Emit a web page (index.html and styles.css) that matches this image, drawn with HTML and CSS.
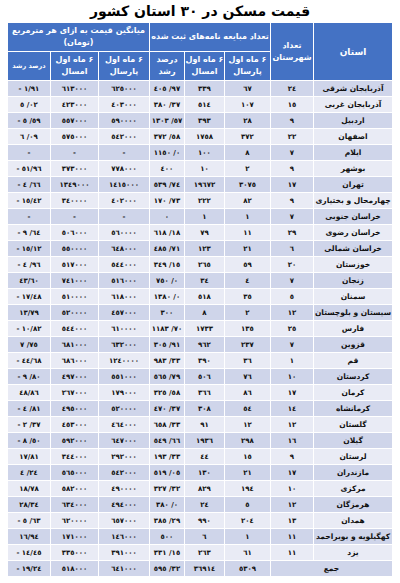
FILE: index.html
```html
<!DOCTYPE html>
<html lang="fa" dir="rtl">
<head>
<meta charset="utf-8">
<link rel="stylesheet" href="styles.css">
</head>
<body>
<h1 class="title">قیمت مسکن در ۳۰ استان کشور</h1>
<table class="grid">
<colgroup>
<col class="c-prov"><col class="c-city"><col class="c-a"><col class="c-b"><col class="c-c"><col class="c-d"><col class="c-e"><col class="c-f">
</colgroup>
<thead>
<tr class="h1">
<th rowspan="2" class="big">استان</th>
<th rowspan="2">تعداد<br>شهرستان</th>
<th colspan="3">تعداد مبایعه نامه‌های ثبت شده</th>
<th colspan="3">میانگین قیمت به ازای هر مترمربع<br>(تومان)</th>
</tr>
<tr class="h2">
<th>۶ ماه اول<br>پارسال</th>
<th>۶ ماه اول<br>امسال</th>
<th>درصد<br>رشد</th>
<th>۶ ماه اول<br>پارسال</th>
<th>۶ ماه اول<br>امسال</th>
<th class="tight">درصد رشد</th>
</tr>
</thead>
<tbody>
<tr><td class="p">آذربایجان شرقی</td><td><b>٢٤</b></td><td><b>٦٧</b></td><td><b>٣٣٩</b></td><td><b>٤٠٥ /٩٧</b></td><td><b>٦٢٥٠٠٠</b></td><td><b>٦١٣٠٠٠</b></td><td><b>- ١/٩١</b></td></tr>
<tr><td class="p">آذربایجان غربی</td><td><b>١٥</b></td><td><b>١٠٧</b></td><td><b>٥١٤</b></td><td><b>٣٨٠ /٣٧</b></td><td><b>٤٠٣٠٠٠</b></td><td><b>٤٢٣٠٠٠</b></td><td><b>٥ /٠٢</b></td></tr>
<tr><td class="p">اردبیل</td><td><b>٩</b></td><td><b>٢٨</b></td><td><b>٣٩٣</b></td><td><b>١٣٠٣ /٥٧</b></td><td><b>٥٩٠٠٠٠</b></td><td><b>٥٥٧٠٠٠</b></td><td><b>- ٥ /٥٩</b></td></tr>
<tr><td class="p">اصفهان</td><td><b>٢٢</b></td><td><b>٣٧٢</b></td><td><b>١٧٥٨</b></td><td><b>٣٧٢ /٥٨</b></td><td><b>٥٤٢٠٠٠</b></td><td><b>٥٧٥٠٠٠</b></td><td><b>٦ /٠٩</b></td></tr>
<tr><td class="p">ایلام</td><td><b>٧</b></td><td><b>٨</b></td><td><b>١٠٠</b></td><td><b>١١٥٠ /٠</b></td><td><b>-</b></td><td><b>-</b></td><td><b>-</b></td></tr>
<tr><td class="p">بوشهر</td><td><b>٩</b></td><td><b>٢</b></td><td><b>١٠</b></td><td><b>٤٠٠</b></td><td><b>٧٧٨٠٠٠</b></td><td><b>٣٧٣٠٠٠</b></td><td><b>- ٥١/٩٦</b></td></tr>
<tr><td class="p">تهران</td><td><b>١٧</b></td><td><b>٣٠٧٥</b></td><td><b>١٩٦٧٢</b></td><td><b>٥٣٩ /٧٤</b></td><td><b>١٤١٥٠٠٠</b></td><td><b>١٣٤٩٠٠٠</b></td><td><b>- ٤ /٦٦</b></td></tr>
<tr><td class="p">چهارمحال و بختیاری</td><td><b>٩</b></td><td><b>٨٢</b></td><td><b>٢٢٢</b></td><td><b>١٧٠ /٧٣</b></td><td><b>٤٠٢٠٠٠</b></td><td><b>٣٤٠٠٠٠</b></td><td><b>- ١٥/٤٢</b></td></tr>
<tr><td class="p">خراسان جنوبی</td><td><b>٧</b></td><td><b>١</b></td><td><b>١</b></td><td><b>٠</b></td><td><b>-</b></td><td><b>-</b></td><td><b>-</b></td></tr>
<tr><td class="p">خراسان رضوی</td><td><b>٢٩</b></td><td><b>١١</b></td><td><b>٧٩</b></td><td><b>٦١٨ /١٨</b></td><td><b>٥٦٠٠٠٠</b></td><td><b>٥٠٦٠٠٠</b></td><td><b>- ٩ /٦٤</b></td></tr>
<tr><td class="p">خراسان شمالی</td><td><b>٦</b></td><td><b>٢١</b></td><td><b>١٢٣</b></td><td><b>٤٨٥ /٧١</b></td><td><b>٦٤٨٠٠٠</b></td><td><b>٥٥٠٠٠٠</b></td><td><b>- ١٥/١٢</b></td></tr>
<tr><td class="p">خوزستان</td><td><b>٢٠</b></td><td><b>٥٩</b></td><td><b>٢٦٥</b></td><td><b>٣٤٩ /١٥</b></td><td><b>٥٤٤٠٠٠</b></td><td><b>٥١٧٠٠٠</b></td><td><b>- ٤ /٩٦</b></td></tr>
<tr><td class="p">زنجان</td><td><b>٧</b></td><td><b>٤</b></td><td><b>٣٤</b></td><td><b>٧٥٠ /٠</b></td><td><b>٥١٦٠٠٠</b></td><td><b>٧٤١٠٠٠</b></td><td><b>٤٣/٦٠</b></td></tr>
<tr><td class="p">سمنان</td><td><b>٥</b></td><td><b>٣٥</b></td><td><b>٥١٨</b></td><td><b>١٣٨٠ /٠</b></td><td><b>٦١٨٠٠٠</b></td><td><b>٥١٠٠٠٠</b></td><td><b>- ١٧/٤٨</b></td></tr>
<tr><td class="p">سیستان و بلوچستان</td><td><b>١٢</b></td><td><b>٢</b></td><td><b>٨</b></td><td><b>٣٠٠</b></td><td><b>٤٥٧٠٠٠</b></td><td><b>٥٢٠٠٠٠</b></td><td><b>١٣/٧٩</b></td></tr>
<tr><td class="p">فارس</td><td><b>٢٥</b></td><td><b>١٣٥</b></td><td><b>١٧٣٣</b></td><td><b>١١٨٣ /٧٠</b></td><td><b>٦١٠٠٠٠</b></td><td><b>٥٤٤٠٠٠</b></td><td><b>- ١٠/٨٢</b></td></tr>
<tr><td class="p">قزوین</td><td><b>٧</b></td><td><b>٢٣٧</b></td><td><b>٩٦٢</b></td><td><b>٣٠٥ /٩١</b></td><td><b>٦٣٢٠٠٠</b></td><td><b>٦٨١٠٠٠</b></td><td><b>٧ /٧٥</b></td></tr>
<tr><td class="p">قم</td><td><b>١</b></td><td><b>٣٦</b></td><td><b>٣٩٠</b></td><td><b>٩٨٣ /٣٣</b></td><td><b>١٢٤٠٠٠٠</b></td><td><b>٦٨٦٠٠٠</b></td><td><b>- ٤٤/٦٨</b></td></tr>
<tr><td class="p">کردستان</td><td><b>١٠</b></td><td><b>٧٦</b></td><td><b>٥٠٦</b></td><td><b>٥٦٥ /٧٩</b></td><td><b>٥٥١٠٠٠</b></td><td><b>٤٩٧٠٠٠</b></td><td><b>- ٩ /٨٠</b></td></tr>
<tr><td class="p">کرمان</td><td><b>١٧</b></td><td><b>٨٦</b></td><td><b>٣٦٦</b></td><td><b>٣٢٥ /٥٨</b></td><td><b>١٧٩٠٠٠</b></td><td><b>٢٦٧٠٠٠</b></td><td><b>٤٨/٨٦</b></td></tr>
<tr><td class="p">کرمانشاه</td><td><b>١٤</b></td><td><b>٥٤</b></td><td><b>٣٠٨</b></td><td><b>٤٧٠ /٣٧</b></td><td><b>٥٢٠٠٠٠</b></td><td><b>٤٩٥٠٠٠</b></td><td><b>- ٤ /٨١</b></td></tr>
<tr><td class="p">گلستان</td><td><b>١٢</b></td><td><b>١٢</b></td><td><b>٩١</b></td><td><b>٦٥٨ /٣٣</b></td><td><b>٤٦٤٠٠٠</b></td><td><b>٤٥٣٠٠٠</b></td><td><b>- ٢ /٣٧</b></td></tr>
<tr><td class="p">گیلان</td><td><b>١٦</b></td><td><b>٢٩٨</b></td><td><b>١٩٣٦</b></td><td><b>٥٤٩ /٦٦</b></td><td><b>٦٤٧٠٠٠</b></td><td><b>٥٩٢٠٠٠</b></td><td><b>- ٨ /٥٠</b></td></tr>
<tr><td class="p">لرستان</td><td><b>٩</b></td><td><b>١٥</b></td><td><b>٤٤</b></td><td><b>١٩٣ /٣٣</b></td><td><b>٢٩٢٠٠٠</b></td><td><b>٣٤٤٠٠٠</b></td><td><b>١٧/٨١</b></td></tr>
<tr><td class="p">مازندران</td><td><b>١٧</b></td><td><b>٢١</b></td><td><b>١٣٠</b></td><td><b>٥١٩ /٠٥</b></td><td><b>٥٤٢٠٠٠</b></td><td><b>٥٦٥٠٠٠</b></td><td><b>٤ /٢٤</b></td></tr>
<tr><td class="p">مرکزی</td><td><b>١٠</b></td><td><b>١٩٤</b></td><td><b>٨٢٩</b></td><td><b>٣٢٧ /٣٢</b></td><td><b>٤٩٠٠٠٠</b></td><td><b>٥٨٢٠٠٠</b></td><td><b>١٨/٧٨</b></td></tr>
<tr><td class="p">هرمزگان</td><td><b>١٢</b></td><td><b>٥</b></td><td><b>٢٤</b></td><td><b>٣٨٠ /٠</b></td><td><b>٤٩٤٠٠٠</b></td><td><b>٦٣٤٠٠٠</b></td><td><b>٢٨/٣٤</b></td></tr>
<tr><td class="p">همدان</td><td><b>١٣</b></td><td><b>٢٠٤</b></td><td><b>٩٩٠</b></td><td><b>٣٨٥ /٢٩</b></td><td><b>٦٥٧٠٠٠</b></td><td><b>٦٢٠٠٠٠</b></td><td><b>- ٥ /٦٣</b></td></tr>
<tr><td class="p">کهگیلویه و بویراحمد</td><td><b>١١</b></td><td><b>١</b></td><td><b>٦</b></td><td><b>٥٠٠</b></td><td><b>١٤٦٠٠٠</b></td><td><b>١٧١٠٠٠</b></td><td><b>١٦/٩٤</b></td></tr>
<tr><td class="p">یزد</td><td><b>١١</b></td><td><b>٦١</b></td><td><b>٢٦٣</b></td><td><b>٣٣١ /١٥</b></td><td><b>٣٩١٠٠٠</b></td><td><b>٣٣٥٠٠٠</b></td><td><b>- ١٤/٤٥</b></td></tr>
<tr><td class="p" colspan="2">جمع</td><td><b>٥٣٠٩</b></td><td><b>٣٦٩١٤</b></td><td><b>٥٩٥ /٣٢</b></td><td><b>٦٤١٠٠٠</b></td><td><b>٥١٨٠٠٠</b></td><td><b>- ١٩/٢٤</b></td></tr>
</tbody>
</table>
</body>
</html>
```
FILE: styles.css
```css
html, body {
  margin: 0;
  padding: 0;
  background: #ffffff;
}
body {
  font-family: "DejaVu Sans", "Noto Sans", sans-serif;
  color: #000;
}
.title {
  margin: 0;
  height: 22px;
  line-height: 22px;
  font-size: 14px;
  font-weight: bold;
  text-align: center;
  direction: rtl;
}
.grid {
  margin: 0 7px 0 8px;
  width: 385px;
  border-collapse: collapse;
  table-layout: fixed;
  direction: rtl;
}
.c-prov { width: 79px; }
.c-city { width: 43px; }
.c-a { width: 46px; }
.c-b { width: 40px; }
.c-c { width: 35px; }
.c-d { width: 51px; }
.c-e { width: 48px; }
.c-f { width: 43px; }
.grid th {
  background: #4472c4;
  color: #ffffff;
  font-size: 8px;
  font-weight: bold;
  line-height: 12px;
  height: 28px;
  padding: 0;
  border: 1px solid #ffffff;
  text-align: center;
  vertical-align: middle;
  white-space: nowrap;
  overflow: hidden;
}
.grid th.big {
  font-size: 9px;
}
.grid th.tight {
  font-size: 6.5px;
}
.grid td {
  height: 15px;
  padding: 0;
  border: 1px solid #ffffff;
  text-align: center;
  vertical-align: middle;
  font-size: 7px;
  line-height: 10px;
  white-space: nowrap;
  overflow: hidden;
  color: #111;
}
.grid td b {
  display: inline-block;
  direction: ltr;
  unicode-bidi: bidi-override;
  font-weight: bold;
}
.grid td.p {
  font-size: 7.5px;
  font-weight: bold;
  direction: rtl;
}
.grid tbody tr:nth-child(odd) td {
  background: #cfd5ea;
}
.grid tbody tr:nth-child(even) td {
  background: #e9ebf5;
}
```
